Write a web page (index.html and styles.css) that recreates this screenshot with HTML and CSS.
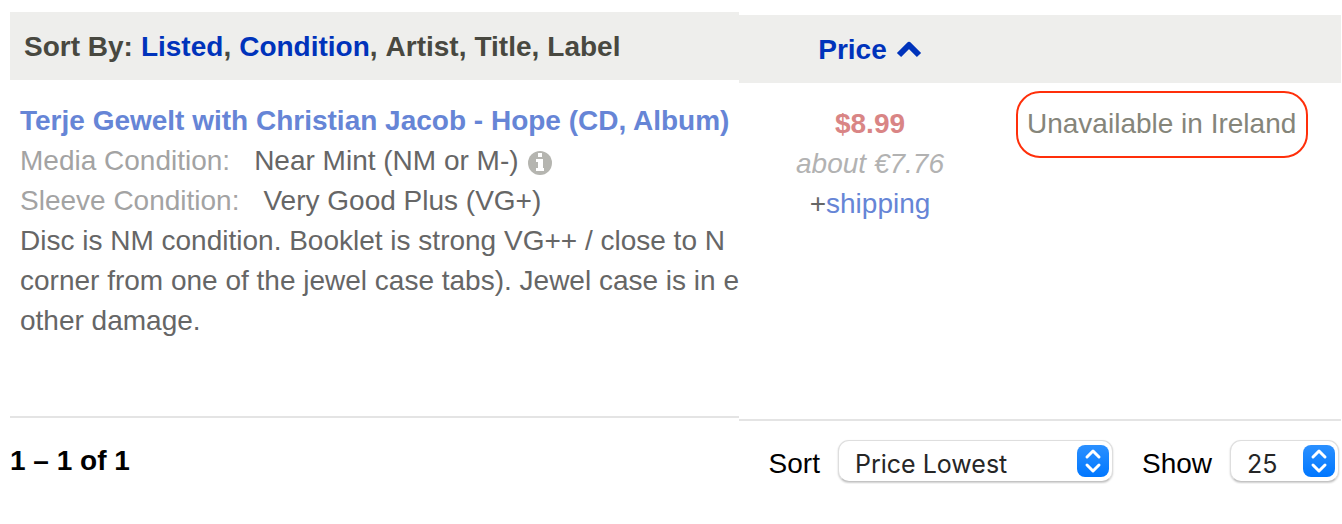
FILE: index.html
```
<!DOCTYPE html>
<html lang="en">
<head>
  <meta charset="UTF-8" />
  <meta name="viewport" content="width=device-width, initial-scale=1.0" />
  <title>Marketplace Listing</title>
  <link rel="stylesheet" href="styles.css">
</head>
<body>
  <main class="listing">
    <section class="items">
      <div class="bar">
        <span>Sort By:</span>
        <span><a href="#">Listed</a>,</span>
        <span><a href="#">Condition</a>,</span>
        <span>Artist,</span>
        <span>Title,</span>
        <span>Label</span>
      </div>
      <div class="item">
        <a class="title" href="#">Terje Gewelt with Christian Jacob - Hope (CD, Album)</a>
        <div class="condition">
          <span class="label">Media Condition:</span>
          <span>Near Mint (NM or M-)</span>
          <svg class="info" viewBox="0 0 24 24" aria-hidden="true">
            <circle cx="12" cy="12" r="12" fill="#b5b5b0" />
            <path d="M10 2h4v4h-4zM8 8h7v9h1v3H8v-3h2v-6H8z" fill="#fff" />
          </svg>
        </div>
        <div class="condition">
          <span class="label">Sleeve Condition:</span>
          <span>Very Good Plus (VG+)</span>
        </div>
        <p class="notes">Disc is NM condition. Booklet is strong VG++ / close to N<br>corner from one of the jewel case tabs). Jewel case is in e<br>other damage.</p>
      </div>
      <div class="footer">
        <strong>1 – 1 of 1</strong>
      </div>
    </section>

    <section class="prices">
      <div class="bar columns">
        <a class="price-sort" href="#">Price
          <svg class="caret" viewBox="0 0 26 18" aria-hidden="true">
            <path d="M3 14L13 4l10 10" fill="none" stroke="#0033bb" stroke-width="6" stroke-linejoin="round" />
          </svg>
        </a>
      </div>
      <div class="item columns">
        <div class="price">
          <strong>$8.99</strong>
          <em>about €7.76</em>
          <span>+<a href="#">shipping</a></span>
        </div>
        <div class="status">
          <span class="unavailable">Unavailable in Ireland</span>
        </div>
      </div>
      <form class="footer controls">
        <label for="sort">Sort</label>
        <div class="select sort">
          <select id="sort">
            <option>Price Lowest</option>
          </select>
          <svg class="arrows" viewBox="0 0 32 32" aria-hidden="true">
            <path d="M10 12l6-6 6 6M10 20l6 6 6-6" />
          </svg>
        </div>
        <label for="show">Show</label>
        <div class="select show">
          <select id="show">
            <option>25</option>
          </select>
          <svg class="arrows" viewBox="0 0 32 32" aria-hidden="true">
            <path d="M10 12l6-6 6 6M10 20l6 6 6-6" />
          </svg>
        </div>
      </form>
    </section>
  </main>
</body>
</html>
```
FILE: styles.css
```
* {
  margin: 0;
  padding: 0;
  box-sizing: border-box;
}
body {
  background-color: white;
  color: black;
  font-family: "Liberation Sans", Arial, sans-serif;
  font-size: 28px;
  line-height: 40px;
}
a {
  color: #0033bb;
  text-decoration: none;
}
.listing {
  display: grid;
  grid-template-columns: minmax(0, 729fr) minmax(0, 602fr);
  padding: 12px 1px 0 10px;
}
.items {
  overflow: hidden;
  white-space: nowrap;
}
.prices {
  padding-top: 3px;
}
.bar {
  display: flex;
  gap: 8px;
  padding: 15px 14px 13px;
  background-color: #eeeeec;
  color: #484840;
  font-weight: bold;
}
.item {
  min-height: 336px;
  padding: 21px 10px;
  color: #666;
}
.item a {
  color: #6685d6;
}
.title {
  display: block;
  font-weight: bold;
}
.condition {
  display: flex;
  align-items: center;
}
.label {
  margin-right: 24px;
  color: #a3a3a3;
}
.info {
  width: 24px;
  height: 24px;
  margin: 4px 0 0 9px;
}
.footer {
  padding-top: 23px;
  border-top: 2px solid #e4e4e4;
}

/* price side */
.columns {
  display: grid;
  grid-template-columns: 262fr 340fr;
  gap: 0;
  padding-left: 0;
  padding-right: 0;
}
.price-sort {
  display: flex;
  justify-content: center;
  align-items: center;
  gap: 9px;
}
.caret {
  width: 26px;
  height: 18px;
}
.price {
  display: flex;
  flex-direction: column;
  align-items: center;
}
.price strong {
  color: #d98585;
}
.price em {
  color: #b2b2b2;
}
.status {
  margin-top: -13px;
  padding-left: 15px;
}
.unavailable {
  display: inline-block;
  padding: 11px 10px 12px 9px;
  border: 2px solid #ff2f0a;
  border-radius: 24px;
  color: #85857a;
  white-space: nowrap;
}
.controls {
  display: flex;
  align-items: center;
  justify-content: flex-end;
  padding-top: 17px;
  padding-right: 2px;
}
.controls label {
  padding-top: 6px;
}
.select {
  position: relative;
  margin-left: 18px;
}
.sort {
  width: 275px;
  margin-right: 29px;
}
.show {
  width: 109px;
}
select {
  display: block;
  width: 100%;
  height: 42px;
  padding: 5px 40px 0 16px;
  appearance: none;
  border: 1px solid #dedede;
  border-bottom-color: #c4c4c4;
  border-radius: 11px;
  background-color: white;
  box-shadow: 0 1px 2px rgba(0, 0, 0, 0.2);
  color: #262626;
  font-family: Inter, sans-serif;
  font-size: 25px;
}
.arrows {
  position: absolute;
  top: 5px;
  right: 4px;
  width: 32px;
  height: 32px;
  border-radius: 8px;
  background: linear-gradient(#2b90ff, #0077ff);
  pointer-events: none;
}
.arrows path {
  fill: none;
  stroke: white;
  stroke-width: 3;
  stroke-linecap: round;
  stroke-linejoin: round;
}
```
